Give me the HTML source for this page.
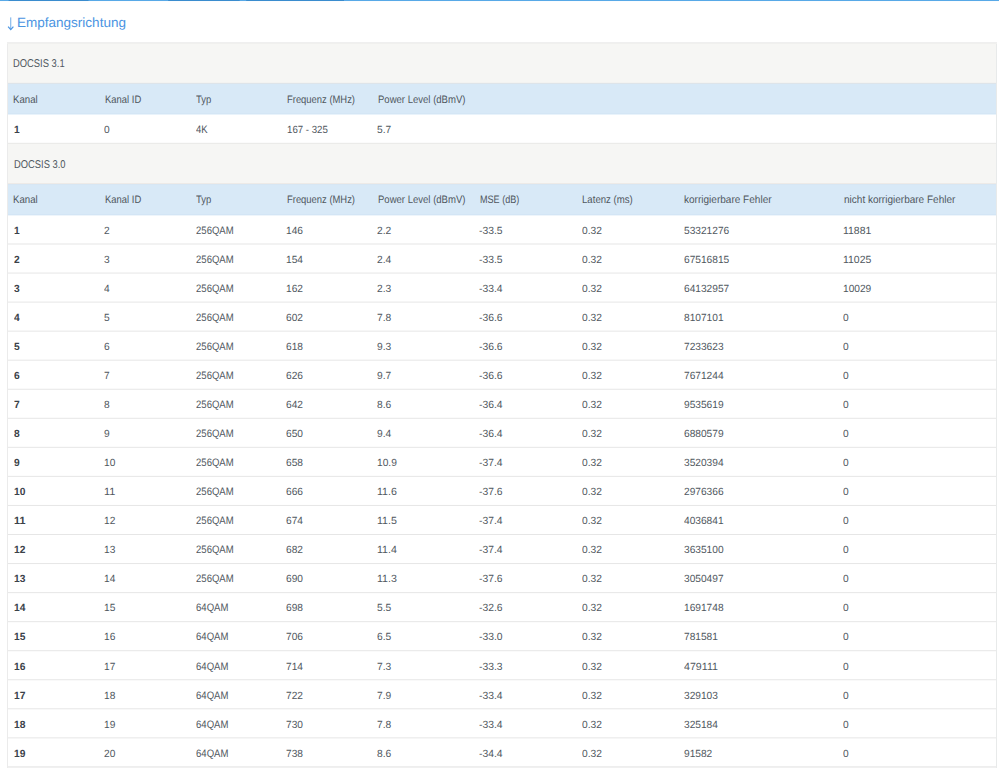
<!DOCTYPE html>
<html><head><meta charset="utf-8"><title>Empfangsrichtung</title>
<style>
html,body{margin:0;padding:0;background:#fff}
body{width:999px;height:768px;position:relative;overflow:hidden;font-family:"Liberation Sans",sans-serif;font-size:10.4px;color:#4f575e}
.r{position:absolute}
.t{text-rendering:geometricPrecision;position:absolute;white-space:nowrap;line-height:16px;transform-origin:0 0;display:block}
.b{font-weight:bold;color:#3b4249}
</style></head><body>
<div class="r" style="left:0px;top:0px;width:999px;height:1px;background:#58a9e7"></div>
<div class="r" style="left:9px;top:0px;width:79px;height:1px;background:#3a8cce"></div>
<div class="r" style="left:8px;top:0px;width:1px;height:1px;background:#4c9ddd"></div>
<div class="r" style="left:88px;top:0px;width:1px;height:1px;background:#499ada"></div>
<div class="r" style="left:169px;top:0px;width:70px;height:1px;background:#3a8cce"></div>
<div class="r" style="left:168px;top:0px;width:1px;height:1px;background:#4092d3"></div>
<div class="r" style="left:239px;top:0px;width:1px;height:1px;background:#4395d6"></div>
<div class="r" style="left:247px;top:0px;width:97px;height:1px;background:#3a8cce"></div>
<div class="r" style="left:246px;top:0px;width:1px;height:1px;background:#4092d3"></div>
<div class="r" style="left:0px;top:1px;width:999px;height:1px;background:#fbfdff"></div>
<div class="r" style="left:7px;top:43px;width:1px;height:725px;background:#ebebeb"></div>
<div class="r" style="left:996px;top:43px;width:1px;height:725px;background:#e8eaea"></div>
<div class="r" style="left:7px;top:42px;width:990px;height:1px;background:#efefef"></div>
<div class="r" style="left:7px;top:43px;width:990px;height:1px;background:#f0f0ee"></div>
<div class="r" style="left:8px;top:44px;width:988px;height:38px;background:#f6f6f4"></div>
<div class="r" style="left:8px;top:82px;width:988px;height:1px;background:#f3f3f1"></div>
<div class="r" style="left:8px;top:83px;width:988px;height:1px;background:#dde4ea"></div>
<div class="r" style="left:8px;top:84px;width:988px;height:29px;background:#d8e9f7"></div>
<div class="r" style="left:8px;top:113px;width:988px;height:1px;background:#d4e6f5"></div>
<div class="r" style="left:8px;top:114px;width:988px;height:1px;background:#e9f3fb"></div>
<div class="r" style="left:8px;top:142px;width:988px;height:1px;background:#fbfbfb"></div>
<div class="r" style="left:8px;top:143px;width:988px;height:1px;background:#ebebe9"></div>
<div class="r" style="left:8px;top:144px;width:988px;height:39px;background:#f6f6f4"></div>
<div class="r" style="left:8px;top:183px;width:988px;height:1px;background:#edeae7"></div>
<div class="r" style="left:8px;top:184px;width:988px;height:1px;background:#d7e6f3"></div>
<div class="r" style="left:8px;top:185px;width:988px;height:29px;background:#d8e9f7"></div>
<div class="r" style="left:8px;top:214px;width:988px;height:1px;background:#d3e5f5"></div>
<div class="r" style="left:8px;top:215px;width:988px;height:1px;background:#eef5fb"></div>
<div class="r" style="left:8px;top:243px;width:988px;height:1px;background:#f2f2f2"></div>
<div class="r" style="left:8px;top:244px;width:988px;height:1px;background:#f2f2f2"></div>
<div class="r" style="left:8px;top:272px;width:988px;height:1px;background:#f4f4f4"></div>
<div class="r" style="left:8px;top:273px;width:988px;height:1px;background:#f1f1f1"></div>
<div class="r" style="left:8px;top:301px;width:988px;height:1px;background:#f5f5f5"></div>
<div class="r" style="left:8px;top:302px;width:988px;height:1px;background:#f0f0f0"></div>
<div class="r" style="left:8px;top:330px;width:988px;height:1px;background:#f6f6f6"></div>
<div class="r" style="left:8px;top:331px;width:988px;height:1px;background:#efefef"></div>
<div class="r" style="left:8px;top:359px;width:988px;height:1px;background:#f7f7f7"></div>
<div class="r" style="left:8px;top:360px;width:988px;height:1px;background:#eeeeee"></div>
<div class="r" style="left:8px;top:388px;width:988px;height:1px;background:#f9f9f9"></div>
<div class="r" style="left:8px;top:389px;width:988px;height:1px;background:#ececec"></div>
<div class="r" style="left:8px;top:417px;width:988px;height:1px;background:#fafafa"></div>
<div class="r" style="left:8px;top:418px;width:988px;height:1px;background:#ebebeb"></div>
<div class="r" style="left:8px;top:446px;width:988px;height:1px;background:#fbfbfb"></div>
<div class="r" style="left:8px;top:447px;width:988px;height:1px;background:#eaeaea"></div>
<div class="r" style="left:8px;top:475px;width:988px;height:1px;background:#fcfcfc"></div>
<div class="r" style="left:8px;top:476px;width:988px;height:1px;background:#e9e9e9"></div>
<div class="r" style="left:8px;top:504px;width:988px;height:1px;background:#fefefe"></div>
<div class="r" style="left:8px;top:505px;width:988px;height:1px;background:#e7e7e7"></div>
<div class="r" style="left:8px;top:534px;width:988px;height:1px;background:#e6e6e6"></div>
<div class="r" style="left:8px;top:563px;width:988px;height:1px;background:#e7e7e7"></div>
<div class="r" style="left:8px;top:564px;width:988px;height:1px;background:#fefefe"></div>
<div class="r" style="left:8px;top:592px;width:988px;height:1px;background:#e9e9e9"></div>
<div class="r" style="left:8px;top:593px;width:988px;height:1px;background:#fcfcfc"></div>
<div class="r" style="left:8px;top:621px;width:988px;height:1px;background:#eaeaea"></div>
<div class="r" style="left:8px;top:622px;width:988px;height:1px;background:#fbfbfb"></div>
<div class="r" style="left:8px;top:650px;width:988px;height:1px;background:#ebebeb"></div>
<div class="r" style="left:8px;top:651px;width:988px;height:1px;background:#fafafa"></div>
<div class="r" style="left:8px;top:679px;width:988px;height:1px;background:#ececec"></div>
<div class="r" style="left:8px;top:680px;width:988px;height:1px;background:#f9f9f9"></div>
<div class="r" style="left:8px;top:708px;width:988px;height:1px;background:#ededed"></div>
<div class="r" style="left:8px;top:709px;width:988px;height:1px;background:#f8f8f8"></div>
<div class="r" style="left:8px;top:737px;width:988px;height:1px;background:#efefef"></div>
<div class="r" style="left:8px;top:738px;width:988px;height:1px;background:#f6f6f6"></div>
<div class="r" style="left:8px;top:766px;width:988px;height:1px;background:#eeeeee"></div>
<div class="r" style="left:8px;top:767px;width:988px;height:1px;background:#f0f0f0"></div>
<span class="t" style="left:16.85px;top:15px;transform:scaleX(1.0093);font-size:13.4px;color:#4a94e2">Empfangsrichtung</span>
<svg class="r" style="left:6px;top:15px" width="10" height="16" viewBox="0 0 10 16"><path d="M4.75 2.4V14.2" fill="none" stroke="#6fabe8" stroke-width="1"/><path d="M2.1 11.6L4.75 14.6L7.4 11.6" fill="none" stroke="#4a94e2" stroke-width="1.2"/></svg>
<span class="t" style="left:13.45px;top:56px;transform:scaleX(0.8302);font-size:11.3px">DOCSIS 3.1</span>
<span class="t" style="left:13.65px;top:157px;transform:scaleX(0.8286);font-size:11.3px">DOCSIS 3.0</span>
<span class="t" style="left:13.35px;top:92px;transform:scaleX(0.8949);font-size:10.8px">Kanal</span>
<span class="t" style="left:104.75px;top:92px;transform:scaleX(0.8744);font-size:10.8px">Kanal ID</span>
<span class="t" style="left:195.85px;top:92px;transform:scaleX(0.8793);font-size:10.8px">Typ</span>
<span class="t" style="left:286.75px;top:92px;transform:scaleX(0.8718);font-size:10.8px">Frequenz (MHz)</span>
<span class="t" style="left:377.75px;top:92px;transform:scaleX(0.8834);font-size:10.8px">Power Level (dBmV)</span>
<span class="t" style="left:13.35px;top:192px;transform:scaleX(0.8949);font-size:10.8px">Kanal</span>
<span class="t" style="left:104.75px;top:192px;transform:scaleX(0.8744);font-size:10.8px">Kanal ID</span>
<span class="t" style="left:195.85px;top:192px;transform:scaleX(0.8793);font-size:10.8px">Typ</span>
<span class="t" style="left:286.75px;top:192px;transform:scaleX(0.8718);font-size:10.8px">Frequenz (MHz)</span>
<span class="t" style="left:377.75px;top:192px;transform:scaleX(0.8834);font-size:10.8px">Power Level (dBmV)</span>
<span class="t" style="left:479.75px;top:192px;transform:scaleX(0.8397);font-size:10.8px">MSE (dB)</span>
<span class="t" style="left:582.05px;top:192px;transform:scaleX(0.8912);font-size:10.8px">Latenz (ms)</span>
<span class="t" style="left:684.15px;top:192px;transform:scaleX(0.9294);font-size:10.8px">korrigierbare Fehler</span>
<span class="t" style="left:843.85px;top:192px;transform:scaleX(0.9279);font-size:10.8px">nicht korrigierbare Fehler</span>
<span class="t b" style="left:13.75px;top:123px;transform:scaleX(0.9854)">1</span>
<span class="t" style="left:104.20px;top:123px;transform:scaleX(0.9785)">0</span>
<span class="t" style="left:196.20px;top:122px;transform:scaleX(0.8788);font-size:10.8px">4K</span>
<span class="t" style="left:286.55px;top:123px;transform:scaleX(0.9306)">167 - 325</span>
<span class="t" style="left:377.20px;top:123px;transform:scaleX(0.9856)">5.7</span>
<span class="t b" style="left:13.75px;top:224px;transform:scaleX(0.9854)">1</span>
<span class="t" style="left:104.20px;top:224px;transform:scaleX(0.9785)">2</span>
<span class="t" style="left:196.20px;top:223px;transform:scaleX(0.8850);font-size:10.8px">256QAM</span>
<span class="t" style="left:286.20px;top:224px;transform:scaleX(0.9785)">146</span>
<span class="t" style="left:377.20px;top:224px;transform:scaleX(0.9856)">2.2</span>
<span class="t" style="left:479.20px;top:224px;transform:scaleX(0.9943)">-33.5</span>
<span class="t" style="left:581.50px;top:224px;transform:scaleX(0.9836)">0.32</span>
<span class="t" style="left:683.60px;top:224px;transform:scaleX(0.9785)">53321276</span>
<span class="t" style="left:843.30px;top:224px;transform:scaleX(1.0053)">11881</span>
<span class="t b" style="left:13.75px;top:253px;transform:scaleX(0.9854)">2</span>
<span class="t" style="left:104.20px;top:253px;transform:scaleX(0.9785)">3</span>
<span class="t" style="left:196.20px;top:252px;transform:scaleX(0.8850);font-size:10.8px">256QAM</span>
<span class="t" style="left:286.20px;top:253px;transform:scaleX(0.9785)">154</span>
<span class="t" style="left:377.20px;top:253px;transform:scaleX(0.9856)">2.4</span>
<span class="t" style="left:479.20px;top:253px;transform:scaleX(0.9943)">-33.5</span>
<span class="t" style="left:581.50px;top:253px;transform:scaleX(0.9836)">0.32</span>
<span class="t" style="left:683.60px;top:253px;transform:scaleX(0.9785)">67516815</span>
<span class="t" style="left:843.30px;top:253px;transform:scaleX(1.0053)">11025</span>
<span class="t b" style="left:13.75px;top:282px;transform:scaleX(0.9854)">3</span>
<span class="t" style="left:104.20px;top:282px;transform:scaleX(0.9785)">4</span>
<span class="t" style="left:196.20px;top:281px;transform:scaleX(0.8850);font-size:10.8px">256QAM</span>
<span class="t" style="left:286.20px;top:282px;transform:scaleX(0.9785)">162</span>
<span class="t" style="left:377.20px;top:282px;transform:scaleX(0.9856)">2.3</span>
<span class="t" style="left:479.20px;top:282px;transform:scaleX(0.9943)">-33.4</span>
<span class="t" style="left:581.50px;top:282px;transform:scaleX(0.9836)">0.32</span>
<span class="t" style="left:683.60px;top:282px;transform:scaleX(0.9785)">64132957</span>
<span class="t" style="left:843.30px;top:282px;transform:scaleX(0.9785)">10029</span>
<span class="t b" style="left:13.75px;top:311px;transform:scaleX(0.9854)">4</span>
<span class="t" style="left:104.20px;top:311px;transform:scaleX(0.9785)">5</span>
<span class="t" style="left:196.20px;top:310px;transform:scaleX(0.8850);font-size:10.8px">256QAM</span>
<span class="t" style="left:286.20px;top:311px;transform:scaleX(0.9785)">602</span>
<span class="t" style="left:377.20px;top:311px;transform:scaleX(0.9856)">7.8</span>
<span class="t" style="left:479.20px;top:311px;transform:scaleX(0.9943)">-36.6</span>
<span class="t" style="left:581.50px;top:311px;transform:scaleX(0.9836)">0.32</span>
<span class="t" style="left:683.60px;top:311px;transform:scaleX(0.9785)">8107101</span>
<span class="t" style="left:843.30px;top:311px;transform:scaleX(0.9785)">0</span>
<span class="t b" style="left:13.75px;top:340px;transform:scaleX(0.9854)">5</span>
<span class="t" style="left:104.20px;top:340px;transform:scaleX(0.9785)">6</span>
<span class="t" style="left:196.20px;top:339px;transform:scaleX(0.8850);font-size:10.8px">256QAM</span>
<span class="t" style="left:286.20px;top:340px;transform:scaleX(0.9785)">618</span>
<span class="t" style="left:377.20px;top:340px;transform:scaleX(0.9856)">9.3</span>
<span class="t" style="left:479.20px;top:340px;transform:scaleX(0.9943)">-36.6</span>
<span class="t" style="left:581.50px;top:340px;transform:scaleX(0.9836)">0.32</span>
<span class="t" style="left:683.60px;top:340px;transform:scaleX(0.9785)">7233623</span>
<span class="t" style="left:843.30px;top:340px;transform:scaleX(0.9785)">0</span>
<span class="t b" style="left:13.75px;top:369px;transform:scaleX(0.9854)">6</span>
<span class="t" style="left:104.20px;top:369px;transform:scaleX(0.9785)">7</span>
<span class="t" style="left:196.20px;top:368px;transform:scaleX(0.8850);font-size:10.8px">256QAM</span>
<span class="t" style="left:286.20px;top:369px;transform:scaleX(0.9785)">626</span>
<span class="t" style="left:377.20px;top:369px;transform:scaleX(0.9856)">9.7</span>
<span class="t" style="left:479.20px;top:369px;transform:scaleX(0.9943)">-36.6</span>
<span class="t" style="left:581.50px;top:369px;transform:scaleX(0.9836)">0.32</span>
<span class="t" style="left:683.60px;top:369px;transform:scaleX(0.9785)">7671244</span>
<span class="t" style="left:843.30px;top:369px;transform:scaleX(0.9785)">0</span>
<span class="t b" style="left:13.75px;top:398px;transform:scaleX(0.9854)">7</span>
<span class="t" style="left:104.20px;top:398px;transform:scaleX(0.9785)">8</span>
<span class="t" style="left:196.20px;top:397px;transform:scaleX(0.8850);font-size:10.8px">256QAM</span>
<span class="t" style="left:286.20px;top:398px;transform:scaleX(0.9785)">642</span>
<span class="t" style="left:377.20px;top:398px;transform:scaleX(0.9856)">8.6</span>
<span class="t" style="left:479.20px;top:398px;transform:scaleX(0.9943)">-36.4</span>
<span class="t" style="left:581.50px;top:398px;transform:scaleX(0.9836)">0.32</span>
<span class="t" style="left:683.60px;top:398px;transform:scaleX(0.9785)">9535619</span>
<span class="t" style="left:843.30px;top:398px;transform:scaleX(0.9785)">0</span>
<span class="t b" style="left:13.75px;top:427px;transform:scaleX(0.9854)">8</span>
<span class="t" style="left:104.20px;top:427px;transform:scaleX(0.9785)">9</span>
<span class="t" style="left:196.20px;top:426px;transform:scaleX(0.8850);font-size:10.8px">256QAM</span>
<span class="t" style="left:286.20px;top:427px;transform:scaleX(0.9785)">650</span>
<span class="t" style="left:377.20px;top:427px;transform:scaleX(0.9856)">9.4</span>
<span class="t" style="left:479.20px;top:427px;transform:scaleX(0.9943)">-36.4</span>
<span class="t" style="left:581.50px;top:427px;transform:scaleX(0.9836)">0.32</span>
<span class="t" style="left:683.60px;top:427px;transform:scaleX(0.9785)">6880579</span>
<span class="t" style="left:843.30px;top:427px;transform:scaleX(0.9785)">0</span>
<span class="t b" style="left:13.75px;top:456px;transform:scaleX(0.9854)">9</span>
<span class="t" style="left:104.20px;top:456px;transform:scaleX(0.9785)">10</span>
<span class="t" style="left:196.20px;top:455px;transform:scaleX(0.8850);font-size:10.8px">256QAM</span>
<span class="t" style="left:286.20px;top:456px;transform:scaleX(0.9785)">658</span>
<span class="t" style="left:377.20px;top:456px;transform:scaleX(0.9836)">10.9</span>
<span class="t" style="left:479.20px;top:456px;transform:scaleX(0.9943)">-37.4</span>
<span class="t" style="left:581.50px;top:456px;transform:scaleX(0.9836)">0.32</span>
<span class="t" style="left:683.60px;top:456px;transform:scaleX(0.9785)">3520394</span>
<span class="t" style="left:843.30px;top:456px;transform:scaleX(0.9785)">0</span>
<span class="t b" style="left:13.75px;top:485px;transform:scaleX(0.9854)">10</span>
<span class="t" style="left:104.20px;top:485px;transform:scaleX(1.0485)">11</span>
<span class="t" style="left:196.20px;top:484px;transform:scaleX(0.8850);font-size:10.8px">256QAM</span>
<span class="t" style="left:286.20px;top:485px;transform:scaleX(0.9785)">666</span>
<span class="t" style="left:377.20px;top:485px;transform:scaleX(1.0225)">11.6</span>
<span class="t" style="left:479.20px;top:485px;transform:scaleX(0.9943)">-37.6</span>
<span class="t" style="left:581.50px;top:485px;transform:scaleX(0.9836)">0.32</span>
<span class="t" style="left:683.60px;top:485px;transform:scaleX(0.9785)">2976366</span>
<span class="t" style="left:843.30px;top:485px;transform:scaleX(0.9785)">0</span>
<span class="t b" style="left:13.75px;top:514px;transform:scaleX(1.0368)">11</span>
<span class="t" style="left:104.20px;top:514px;transform:scaleX(0.9785)">12</span>
<span class="t" style="left:196.20px;top:513px;transform:scaleX(0.8850);font-size:10.8px">256QAM</span>
<span class="t" style="left:286.20px;top:514px;transform:scaleX(0.9785)">674</span>
<span class="t" style="left:377.20px;top:514px;transform:scaleX(1.0225)">11.5</span>
<span class="t" style="left:479.20px;top:514px;transform:scaleX(0.9943)">-37.4</span>
<span class="t" style="left:581.50px;top:514px;transform:scaleX(0.9836)">0.32</span>
<span class="t" style="left:683.60px;top:514px;transform:scaleX(0.9785)">4036841</span>
<span class="t" style="left:843.30px;top:514px;transform:scaleX(0.9785)">0</span>
<span class="t b" style="left:13.75px;top:543px;transform:scaleX(0.9854)">12</span>
<span class="t" style="left:104.20px;top:543px;transform:scaleX(0.9785)">13</span>
<span class="t" style="left:196.20px;top:542px;transform:scaleX(0.8850);font-size:10.8px">256QAM</span>
<span class="t" style="left:286.20px;top:543px;transform:scaleX(0.9785)">682</span>
<span class="t" style="left:377.20px;top:543px;transform:scaleX(1.0225)">11.4</span>
<span class="t" style="left:479.20px;top:543px;transform:scaleX(0.9943)">-37.4</span>
<span class="t" style="left:581.50px;top:543px;transform:scaleX(0.9836)">0.32</span>
<span class="t" style="left:683.60px;top:543px;transform:scaleX(0.9785)">3635100</span>
<span class="t" style="left:843.30px;top:543px;transform:scaleX(0.9785)">0</span>
<span class="t b" style="left:13.75px;top:572px;transform:scaleX(0.9854)">13</span>
<span class="t" style="left:104.20px;top:572px;transform:scaleX(0.9785)">14</span>
<span class="t" style="left:196.20px;top:571px;transform:scaleX(0.8850);font-size:10.8px">256QAM</span>
<span class="t" style="left:286.20px;top:572px;transform:scaleX(0.9785)">690</span>
<span class="t" style="left:377.20px;top:572px;transform:scaleX(1.0225)">11.3</span>
<span class="t" style="left:479.20px;top:572px;transform:scaleX(0.9943)">-37.6</span>
<span class="t" style="left:581.50px;top:572px;transform:scaleX(0.9836)">0.32</span>
<span class="t" style="left:683.60px;top:572px;transform:scaleX(0.9785)">3050497</span>
<span class="t" style="left:843.30px;top:572px;transform:scaleX(0.9785)">0</span>
<span class="t b" style="left:13.75px;top:601px;transform:scaleX(0.9854)">14</span>
<span class="t" style="left:104.20px;top:601px;transform:scaleX(0.9785)">15</span>
<span class="t" style="left:196.20px;top:600px;transform:scaleX(0.8852);font-size:10.8px">64QAM</span>
<span class="t" style="left:286.20px;top:601px;transform:scaleX(0.9785)">698</span>
<span class="t" style="left:377.20px;top:601px;transform:scaleX(0.9856)">5.5</span>
<span class="t" style="left:479.20px;top:601px;transform:scaleX(0.9943)">-32.6</span>
<span class="t" style="left:581.50px;top:601px;transform:scaleX(0.9836)">0.32</span>
<span class="t" style="left:683.60px;top:601px;transform:scaleX(0.9785)">1691748</span>
<span class="t" style="left:843.30px;top:601px;transform:scaleX(0.9785)">0</span>
<span class="t b" style="left:13.75px;top:630px;transform:scaleX(0.9854)">15</span>
<span class="t" style="left:104.20px;top:630px;transform:scaleX(0.9785)">16</span>
<span class="t" style="left:196.20px;top:629px;transform:scaleX(0.8852);font-size:10.8px">64QAM</span>
<span class="t" style="left:286.20px;top:630px;transform:scaleX(0.9785)">706</span>
<span class="t" style="left:377.20px;top:630px;transform:scaleX(0.9856)">6.5</span>
<span class="t" style="left:479.20px;top:630px;transform:scaleX(0.9943)">-33.0</span>
<span class="t" style="left:581.50px;top:630px;transform:scaleX(0.9836)">0.32</span>
<span class="t" style="left:683.60px;top:630px;transform:scaleX(0.9785)">781581</span>
<span class="t" style="left:843.30px;top:630px;transform:scaleX(0.9785)">0</span>
<span class="t b" style="left:13.75px;top:660px;transform:scaleX(0.9854)">16</span>
<span class="t" style="left:104.20px;top:660px;transform:scaleX(0.9785)">17</span>
<span class="t" style="left:196.20px;top:659px;transform:scaleX(0.8852);font-size:10.8px">64QAM</span>
<span class="t" style="left:286.20px;top:660px;transform:scaleX(0.9785)">714</span>
<span class="t" style="left:377.20px;top:660px;transform:scaleX(0.9856)">7.3</span>
<span class="t" style="left:479.20px;top:660px;transform:scaleX(0.9943)">-33.3</span>
<span class="t" style="left:581.50px;top:660px;transform:scaleX(0.9836)">0.32</span>
<span class="t" style="left:683.60px;top:660px;transform:scaleX(1.0240)">479111</span>
<span class="t" style="left:843.30px;top:660px;transform:scaleX(0.9785)">0</span>
<span class="t b" style="left:13.75px;top:689px;transform:scaleX(0.9854)">17</span>
<span class="t" style="left:104.20px;top:689px;transform:scaleX(0.9785)">18</span>
<span class="t" style="left:196.20px;top:688px;transform:scaleX(0.8852);font-size:10.8px">64QAM</span>
<span class="t" style="left:286.20px;top:689px;transform:scaleX(0.9785)">722</span>
<span class="t" style="left:377.20px;top:689px;transform:scaleX(0.9856)">7.9</span>
<span class="t" style="left:479.20px;top:689px;transform:scaleX(0.9943)">-33.4</span>
<span class="t" style="left:581.50px;top:689px;transform:scaleX(0.9836)">0.32</span>
<span class="t" style="left:683.60px;top:689px;transform:scaleX(0.9785)">329103</span>
<span class="t" style="left:843.30px;top:689px;transform:scaleX(0.9785)">0</span>
<span class="t b" style="left:13.75px;top:718px;transform:scaleX(0.9854)">18</span>
<span class="t" style="left:104.20px;top:718px;transform:scaleX(0.9785)">19</span>
<span class="t" style="left:196.20px;top:717px;transform:scaleX(0.8852);font-size:10.8px">64QAM</span>
<span class="t" style="left:286.20px;top:718px;transform:scaleX(0.9785)">730</span>
<span class="t" style="left:377.20px;top:718px;transform:scaleX(0.9856)">7.8</span>
<span class="t" style="left:479.20px;top:718px;transform:scaleX(0.9943)">-33.4</span>
<span class="t" style="left:581.50px;top:718px;transform:scaleX(0.9836)">0.32</span>
<span class="t" style="left:683.60px;top:718px;transform:scaleX(0.9785)">325184</span>
<span class="t" style="left:843.30px;top:718px;transform:scaleX(0.9785)">0</span>
<span class="t b" style="left:13.75px;top:747px;transform:scaleX(0.9854)">19</span>
<span class="t" style="left:104.20px;top:747px;transform:scaleX(0.9785)">20</span>
<span class="t" style="left:196.20px;top:746px;transform:scaleX(0.8852);font-size:10.8px">64QAM</span>
<span class="t" style="left:286.20px;top:747px;transform:scaleX(0.9785)">738</span>
<span class="t" style="left:377.20px;top:747px;transform:scaleX(0.9856)">8.6</span>
<span class="t" style="left:479.20px;top:747px;transform:scaleX(0.9943)">-34.4</span>
<span class="t" style="left:581.50px;top:747px;transform:scaleX(0.9836)">0.32</span>
<span class="t" style="left:683.60px;top:747px;transform:scaleX(0.9785)">91582</span>
<span class="t" style="left:843.30px;top:747px;transform:scaleX(0.9785)">0</span>
</body></html>
